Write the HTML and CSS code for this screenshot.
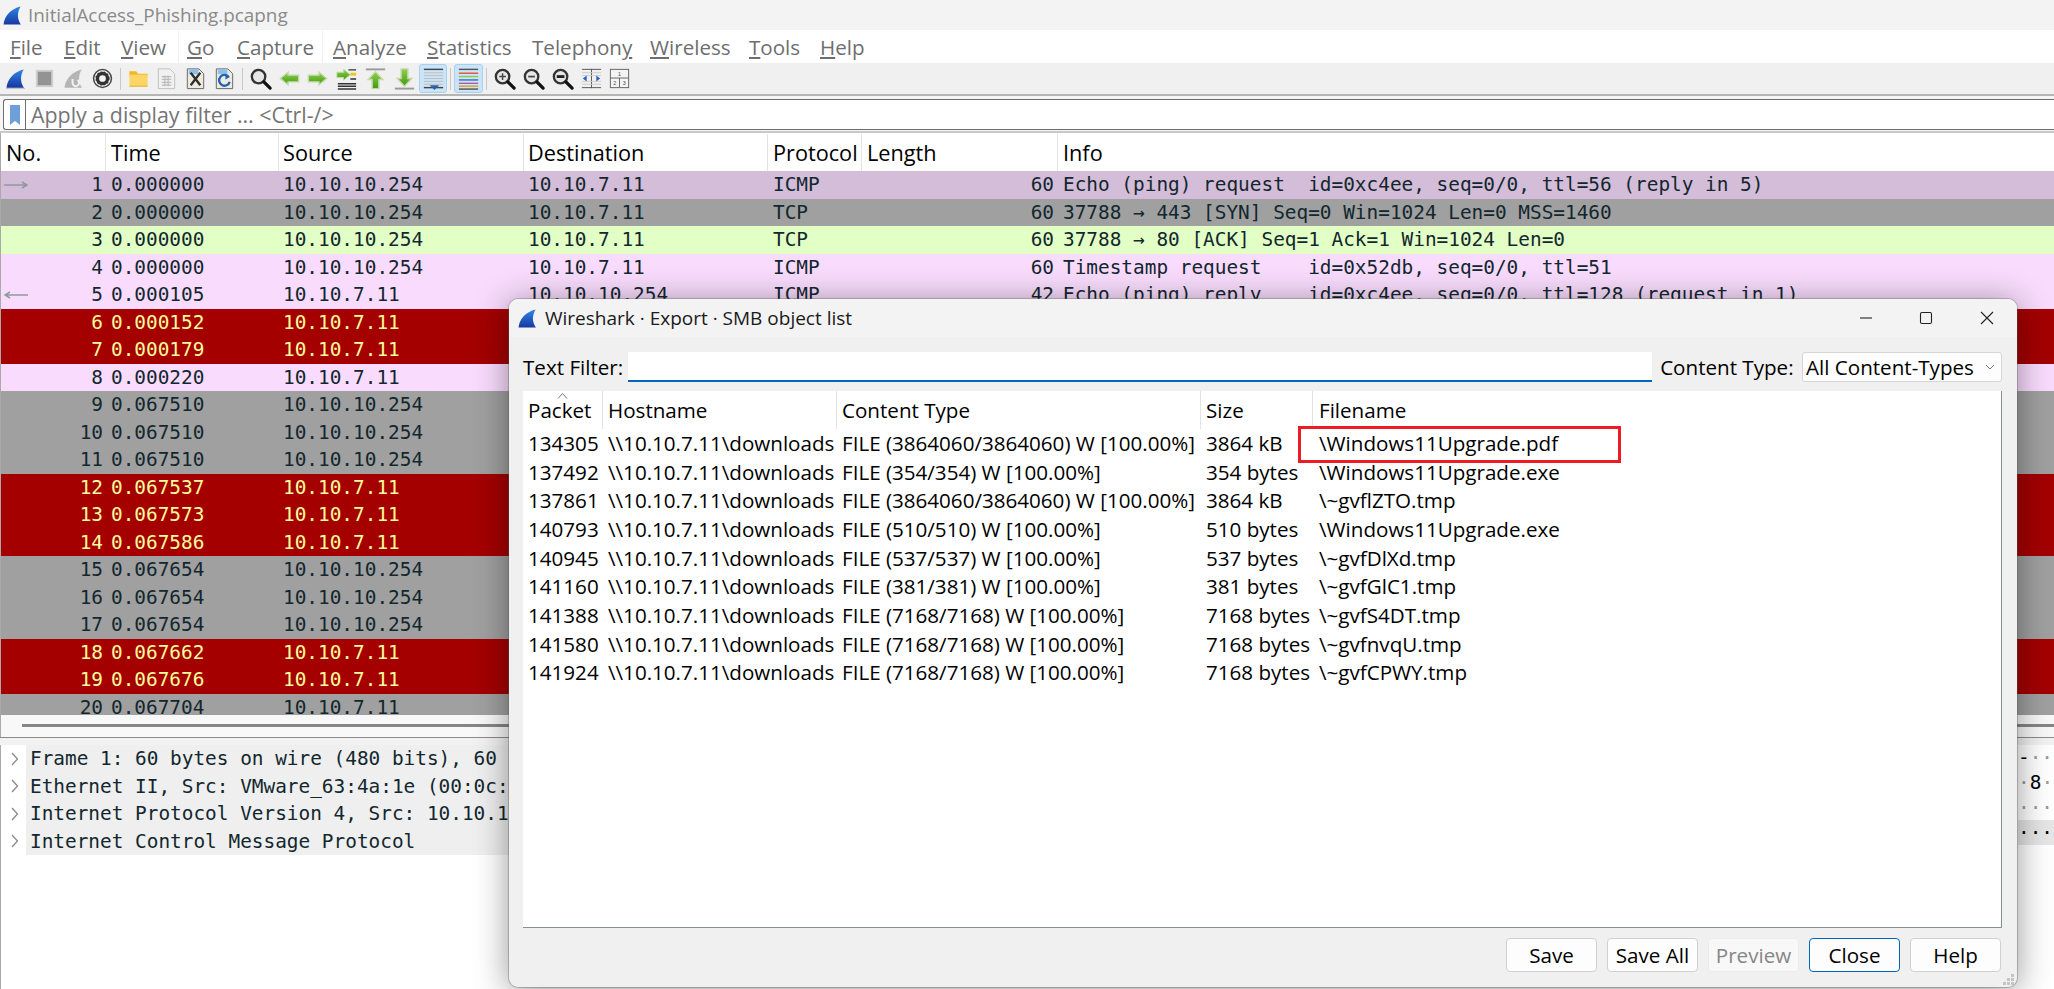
FILE: index.html
```html
<!DOCTYPE html>
<html lang="en">
<head>
<meta charset="utf-8">
<title>InitialAccess_Phishing.pcapng</title>
<link rel="stylesheet" href="styles.css">
</head>
<body>
<svg class="defs" aria-hidden="true">
  <defs>
    <linearGradient id="blue" x1="0" y1="0" x2="0" y2="1"><stop offset="0" stop-color="#2f86e6"/><stop offset="1" stop-color="#17379f"/></linearGradient>
    <linearGradient id="green" x1="0" y1="0" x2="0" y2="1"><stop offset="0" stop-color="#8fd24a"/><stop offset="1" stop-color="#3f9a12"/></linearGradient>
    <symbol id="fin" viewBox="0 0 20 20"><path d="M.6 19.6C1.4 11 8 3 18.6.6 15 6 14.6 13.5 18.8 19.6Z" fill="url(#blue)"/></symbol>
    <symbol id="lens" viewBox="0 0 26 26"><circle cx="11" cy="11" r="7" fill="#e6e6e6" stroke="#333" stroke-width="2.4"/><path d="M16.500 16.500 23 23" stroke="#111" stroke-width="3.400" stroke-linecap="round"/></symbol>
  </defs>
</svg>
<div class="app">
  <header class="titlebar">
    <svg class="logo"><use href="#fin"/></svg>
    <span>InitialAccess_Phishing.pcapng</span>
  </header>
  <nav class="menu">
    <span class="m m-file"><u>F</u>ile</span>
    <span class="m m-edit"><u>E</u>dit</span>
    <span class="m m-view"><u>V</u>iew</span>
    <i class="msep msep-a"></i>
    <span class="m m-go"><u>G</u>o</span>
    <span class="m m-cap"><u>C</u>apture</span>
    <i class="msep msep-b"></i>
    <span class="m m-ana"><u>A</u>nalyze</span>
    <span class="m m-sta"><u>S</u>tatistics</span>
    <span class="m m-tel">Telephon<u>y</u></span>
    <span class="m m-wir"><u>W</u>ireless</span>
    <span class="m m-too"><u>T</u>ools</span>
    <span class="m m-hel"><u>H</u>elp</span>
  </nav>
  <div class="toolbar">
    <span class="tb"><svg viewBox="0 0 26 26"><use href="#fin" x="3" y="3" width="20" height="20"/><path d="M3 23.500h20" stroke="#bdbdbd"/></svg></span>
    <span class="tb"><svg viewBox="0 0 26 26"><rect x="5" y="5" width="16" height="16" fill="#939393" stroke="#cfcfcf" stroke-width="2"/></svg></span>
    <span class="tb"><svg viewBox="0 0 26 26"><path d="M3.600 22.600C4.400 14 11 6 21.600 3.600 18 9 17.600 16.500 21.800 22.600Z" fill="#b5b5b5"/><path d="M12 13.500v4.200a3.400 3.400 0 1 0 5.200-3" fill="none" stroke="#f4f4f4" stroke-width="2"/></svg></span>
    <span class="tb"><svg viewBox="0 0 26 26"><circle cx="13" cy="13" r="9.300" fill="#f4f4f4" stroke="#4a4a4a" stroke-width="1.600"/><circle cx="13" cy="13" r="5.200" fill="none" stroke="#333" stroke-width="3.400"/><circle cx="13" cy="13" r="6.600" fill="none" stroke="#333" stroke-width="1.600" stroke-dasharray="2 1.500"/></svg></span>
    <i class="sep"></i>
    <span class="tb"><svg viewBox="0 0 26 26"><path d="M3.500 5.500h7l2 2.500h10v3h-19Z" fill="#f0b624"/><path d="M3.500 9h19v12h-19Z" fill="#fbd667"/><path d="M3.500 20.500h19v1h-19Z" fill="#e7aa1d"/></svg></span>
    <span class="tb"><svg viewBox="0 0 26 26"><path d="M4.500 3h12l5 5v15.500h-17Z" fill="#f1f1f1" stroke="#c0c0c0"/><path d="M8 11h10M8 14h10M8 17h10M8 20h10M11.300 10v11M14.700 10v11" stroke="#bcbcbc" stroke-width="1.300"/></svg></span>
    <span class="tb"><svg viewBox="0 0 26 26"><path d="M4.500 3h12l5 5v15.500h-17Z" fill="#eeeade" stroke="#666"/><path d="M6 3.500h10v5H6Z" fill="#8cc0ea"/><path d="M8 7l10 13M18 7 8 20" stroke="#2e2e2e" stroke-width="2.400"/></svg></span>
    <span class="tb"><svg viewBox="0 0 26 26"><path d="M4.500 3h12l5 5v15.500h-17Z" fill="#eeeade" stroke="#666"/><path d="M6 3.500h10v5H6Z" fill="#8cc0ea"/><path d="M17.500 11.500a5.600 5.600 0 1 0 .9 5" fill="none" stroke="#1f62b8" stroke-width="2.400"/><path d="M14 8l4.500 3.500-4.500 2.500Z" fill="#1f62b8"/></svg></span>
    <i class="sep"></i>
    <span class="tb"><svg viewBox="0 0 26 26"><use href="#lens" width="26" height="26"/></svg></span>
    <span class="tb"><svg viewBox="0 0 26 26"><path d="M3.500 13l8-6.500V9.500h11v7h-11v3Z" fill="url(#green)" stroke="#c4d8aa" stroke-width="1.500"/></svg></span>
    <span class="tb"><svg viewBox="0 0 26 26"><path d="M22.500 13l-8-6.500V9.500h-11v7h11v3Z" fill="url(#green)" stroke="#c4d8aa" stroke-width="1.500"/></svg></span>
    <span class="tb"><svg viewBox="0 0 26 26"><path d="M4 18.500h19M4 21h19M4 24h19M15 4h8M17 13.500h6" stroke="#333" stroke-width="1.500"/><path d="M17 8.500h6" stroke="#e8c820" stroke-width="3"/><path d="M17 9 10 3.500v3H3v5.500h7v2.800Z" fill="url(#green)" stroke="#c4d8aa"/></svg></span>
    <span class="tb"><svg viewBox="0 0 26 26"><path d="M3 3.500h20" stroke="#9a9a9a" stroke-width="2"/><path d="M13 6l7.500 8h-4v9.500h-7V14h-4Z" fill="url(#green)" stroke="#c4d8aa" stroke-width="1.500"/></svg></span>
    <span class="tb"><svg viewBox="0 0 26 26"><path d="M3 23.500h20" stroke="#9a9a9a" stroke-width="2"/><path d="M13 21l-7.500-8h4V3h7v10h4Z" fill="url(#green)" stroke="#c4d8aa" stroke-width="1.500"/></svg></span>
    <span class="tb on"><svg viewBox="0 0 26 26"><path d="M3 3.500h20" stroke="#444" stroke-width="1.500"/><path d="M3 7h20M3 10h20M3 13h20M3 16h20M3 19h20" stroke="#bdbdbd"/><path d="M3 22.500h20" stroke="#444" stroke-width="1.500"/><path d="M9 20h10l-5 5Z" fill="#2b62a8"/></svg></span>
    <i class="sep"></i>
    <span class="tb on"><svg viewBox="0 0 26 26"><path d="M3 3.500h20" stroke="#555" stroke-width="1.500"/><path d="M3 7.500h20" stroke="#e2524a" stroke-width="1.500"/><path d="M3 11h20" stroke="#8ccf3f" stroke-width="1.500"/><path d="M3 14.500h20" stroke="#3a6fc8" stroke-width="1.500"/><path d="M3 18h20" stroke="#b05ab0" stroke-width="1.500"/><path d="M3 21h20" stroke="#e0a020" stroke-width="1.500"/><path d="M3 24h20" stroke="#555" stroke-width="1.500"/></svg></span>
    <i class="sep"></i>
    <span class="tb"><svg viewBox="0 0 26 26"><use href="#lens" width="26" height="26"/><path d="M7.500 11h7M11 7.500v7" stroke="#444" stroke-width="1.500"/></svg></span>
    <span class="tb"><svg viewBox="0 0 26 26"><use href="#lens" width="26" height="26"/><path d="M7.500 11h7" stroke="#444" stroke-width="1.800"/></svg></span>
    <span class="tb"><svg viewBox="0 0 26 26"><use href="#lens" width="26" height="26"/><path d="M7 11h8" stroke="#222" stroke-width="3"/></svg></span>
    <span class="tb"><svg viewBox="0 0 26 26"><path d="M3 3.500h20M3 22.500h20M13 3v20" stroke="#555"/><path d="M3 7h20M3 10h20M3 16h20M3 19h20" stroke="#ccc"/><path d="M4 13l4-3v6ZM22 13l-4-3v6Z" fill="#2b62c0"/></svg></span>
    <span class="tb"><svg viewBox="0 0 26 26"><rect x="3.500" y="3.500" width="19" height="19" fill="#f4f4f4" stroke="#666"/><path d="M3.500 12.500h19M13 12.500v10" stroke="#666"/><text x="13" y="10" class="pane-n">1</text><text x="8" y="20" class="pane-n">2</text><text x="18" y="20" class="pane-n">3</text></svg></span>
  </div>
  <div class="filter-wrap">
    <div class="filter">
      <span class="bookmark"><svg width="10" height="20" viewBox="0 0 10 20"><path d="M0 0h10v20L5 16 0 20Z" fill="#6f9fd8"/></svg></span>
      <span class="placeholder">Apply a display filter … &lt;Ctrl-/&gt;</span>
    </div>
  </div>
  <section class="plist">
    <div class="prow phead">
      <span>No.</span><span>Time</span><span>Source</span><span>Destination</span><span>Protocol</span><span>Length</span><span>Info</span>
    </div>
    <div class="prow p-sel"><span class="no"><svg class="flow" viewBox="0 0 24 8"><path d="M0 4h22M18 1l5 3-5 3" fill="none" stroke="#8f9a9c" stroke-width="1.500"/></svg>1</span><span>0.000000</span><span>10.10.10.254</span><span>10.10.7.11</span><span>ICMP</span><span class="len">60</span><span>Echo (ping) request  id=0xc4ee, seq=0/0, ttl=56 (reply in 5)</span></div>
    <div class="prow p-gray"><span class="no">2</span><span>0.000000</span><span>10.10.10.254</span><span>10.10.7.11</span><span>TCP</span><span class="len">60</span><span>37788 → 443 [SYN] Seq=0 Win=1024 Len=0 MSS=1460</span></div>
    <div class="prow p-green"><span class="no">3</span><span>0.000000</span><span>10.10.10.254</span><span>10.10.7.11</span><span>TCP</span><span class="len">60</span><span>37788 → 80 [ACK] Seq=1 Ack=1 Win=1024 Len=0</span></div>
    <div class="prow p-pink"><span class="no">4</span><span>0.000000</span><span>10.10.10.254</span><span>10.10.7.11</span><span>ICMP</span><span class="len">60</span><span>Timestamp request    id=0x52db, seq=0/0, ttl=51</span></div>
    <div class="prow p-pink"><span class="no"><svg class="flow" viewBox="0 0 24 8"><path d="M24 4H2M6 1 1 4l5 3" fill="none" stroke="#8f9a9c" stroke-width="1.500"/></svg>5</span><span>0.000105</span><span>10.10.7.11</span><span>10.10.10.254</span><span>ICMP</span><span class="len">42</span><span>Echo (ping) reply    id=0xc4ee, seq=0/0, ttl=128 (request in 1)</span></div>
    <div class="prow p-red"><span class="no">6</span><span>0.000152</span><span>10.10.7.11</span></div>
    <div class="prow p-red"><span class="no">7</span><span>0.000179</span><span>10.10.7.11</span></div>
    <div class="prow p-pink"><span class="no">8</span><span>0.000220</span><span>10.10.7.11</span></div>
    <div class="prow p-gray"><span class="no">9</span><span>0.067510</span><span>10.10.10.254</span></div>
    <div class="prow p-gray"><span class="no">10</span><span>0.067510</span><span>10.10.10.254</span></div>
    <div class="prow p-gray"><span class="no">11</span><span>0.067510</span><span>10.10.10.254</span></div>
    <div class="prow p-red"><span class="no">12</span><span>0.067537</span><span>10.10.7.11</span></div>
    <div class="prow p-red"><span class="no">13</span><span>0.067573</span><span>10.10.7.11</span></div>
    <div class="prow p-red"><span class="no">14</span><span>0.067586</span><span>10.10.7.11</span></div>
    <div class="prow p-gray"><span class="no">15</span><span>0.067654</span><span>10.10.10.254</span></div>
    <div class="prow p-gray"><span class="no">16</span><span>0.067654</span><span>10.10.10.254</span></div>
    <div class="prow p-gray"><span class="no">17</span><span>0.067654</span><span>10.10.10.254</span></div>
    <div class="prow p-red"><span class="no">18</span><span>0.067662</span><span>10.10.7.11</span></div>
    <div class="prow p-red"><span class="no">19</span><span>0.067676</span><span>10.10.7.11</span></div>
    <div class="prow p-gray p-last"><span class="no">20</span><span>0.067704</span><span>10.10.7.11</span></div>
  </section>
  <div class="hscroll"><i></i></div>
  <div class="split"></div>
  <section class="lower">
    <div class="tree">
      <div class="trow"><svg class="chev" viewBox="0 0 8 14"><path d="M1 1l5.500 6L1 13" fill="none" stroke="#8a8a8a" stroke-width="1.300"/></svg><span>Frame 1: 60 bytes on wire (480 bits), 60 bytes captured (480 bits)</span></div>
      <div class="trow"><svg class="chev" viewBox="0 0 8 14"><path d="M1 1l5.500 6L1 13" fill="none" stroke="#8a8a8a" stroke-width="1.300"/></svg><span>Ethernet II, Src: VMware_63:4a:1e (00:0c:29:63:4a:1e)</span></div>
      <div class="trow"><svg class="chev" viewBox="0 0 8 14"><path d="M1 1l5.500 6L1 13" fill="none" stroke="#8a8a8a" stroke-width="1.300"/></svg><span>Internet Protocol Version 4, Src: 10.10.10.254, Dst: 10.10.7.11</span></div>
      <div class="trow"><svg class="chev" viewBox="0 0 8 14"><path d="M1 1l5.500 6L1 13" fill="none" stroke="#8a8a8a" stroke-width="1.300"/></svg><span>Internet Control Message Protocol</span></div>
    </div>
    <div class="hex">
      <div class="hrow"><b>-</b>··</div>
      <div class="hrow">·<b>8</b>·</div>
      <div class="hrow">···</div>
      <div class="hrow hrow-sel"><b>···</b></div>
    </div>
  </section>
</div>

<div class="dialog">
  <div class="d-title">
    <svg class="d-logo"><use href="#fin"/></svg>
    <span class="d-name">Wireshark · Export · SMB object list</span>
    <div class="wctl">
      <span><svg width="14" height="14" viewBox="0 0 14 14"><path d="M1 7h12" stroke="#222" stroke-width="1.100"/></svg></span>
      <span><svg width="14" height="14" viewBox="0 0 14 14"><rect x="1.500" y="1.500" width="11" height="11" rx="1.500" fill="none" stroke="#222" stroke-width="1.100"/></svg></span>
      <span><svg width="14" height="14" viewBox="0 0 14 14"><path d="M1 1l12 12M13 1 1 13" stroke="#222" stroke-width="1.100"/></svg></span>
    </div>
  </div>
  <div class="d-body">
    <div class="d-filter">
      <label>Text Filter:</label>
      <div class="d-input"></div>
      <label>Content Type:</label>
      <div class="combo"><span>All Content-Types</span><svg width="10" height="6" viewBox="0 0 10 6"><path d="M1 1l4 4 4-4" fill="none" stroke="#777"/></svg></div>
    </div>
    <div class="olist">
      <div class="orow ohead">
        <span class="sorted"><svg class="caret" width="11" height="6" viewBox="0 0 11 6"><path d="M1 5.500l4.500-5 4.500 5" fill="none" stroke="#777"/></svg>Packet</span><span>Hostname</span><span>Content Type</span><span>Size</span><span>Filename</span>
      </div>
      <div class="orow"><span>134305</span><span>\\10.10.7.11\downloads</span><span>FILE (3864060/3864060) W [100.00%]</span><span>3864 kB</span><span>\Windows11Upgrade.pdf</span></div>
      <div class="orow"><span>137492</span><span>\\10.10.7.11\downloads</span><span>FILE (354/354) W [100.00%]</span><span>354 bytes</span><span>\Windows11Upgrade.exe</span></div>
      <div class="orow"><span>137861</span><span>\\10.10.7.11\downloads</span><span>FILE (3864060/3864060) W [100.00%]</span><span>3864 kB</span><span>\~gvflZTO.tmp</span></div>
      <div class="orow"><span>140793</span><span>\\10.10.7.11\downloads</span><span>FILE (510/510) W [100.00%]</span><span>510 bytes</span><span>\Windows11Upgrade.exe</span></div>
      <div class="orow"><span>140945</span><span>\\10.10.7.11\downloads</span><span>FILE (537/537) W [100.00%]</span><span>537 bytes</span><span>\~gvfDlXd.tmp</span></div>
      <div class="orow"><span>141160</span><span>\\10.10.7.11\downloads</span><span>FILE (381/381) W [100.00%]</span><span>381 bytes</span><span>\~gvfGlC1.tmp</span></div>
      <div class="orow"><span>141388</span><span>\\10.10.7.11\downloads</span><span>FILE (7168/7168) W [100.00%]</span><span>7168 bytes</span><span>\~gvfS4DT.tmp</span></div>
      <div class="orow"><span>141580</span><span>\\10.10.7.11\downloads</span><span>FILE (7168/7168) W [100.00%]</span><span>7168 bytes</span><span>\~gvfnvqU.tmp</span></div>
      <div class="orow"><span>141924</span><span>\\10.10.7.11\downloads</span><span>FILE (7168/7168) W [100.00%]</span><span>7168 bytes</span><span>\~gvfCPWY.tmp</span></div>
      <div class="redbox"></div>
    </div>
    <div class="d-btns">
      <button>Save</button><button>Save All</button><button class="off">Preview</button><button class="def">Close</button><button>Help</button>
    </div>
  </div>
  <svg class="grip" width="12" height="12" viewBox="0 0 12 12"><path d="M9 0h3v3H9ZM5 4h3v3H5ZM9 4h3v3H9ZM1 8h3v3H1ZM5 8h3v3H5ZM9 8h3v3H9Z" fill="#c4c4c4"/></svg>
</div>
</body>
</html>
```
FILE: styles.css
```css
* { box-sizing: border-box; }
html, body { margin: 0; height: 100%; overflow: hidden; background: #fff; }
body { font-family: "Open Sans", "Noto Sans", sans-serif; font-size: 20.6px; color: #000; position: relative; }
.defs { position: absolute; width: 0; height: 0; }

.app { width: 2054px; height: 989px; display: flex; flex-direction: column; }

.titlebar { height: 30px; background: #f3f3f3; display: flex; align-items: center; color: #8a8a8a; padding-left: 3px; gap: 6px; font-size: 18.9px; }
.logo { width: 19px; height: 19px; }

.menu { height: 33px; background: #fff; color: #6e6e6e; display: flex; align-items: center; padding: 1px 0 0 10px; }
.m { display: block; }
.m-file { width: 54px; }
.m-edit { width: 57px; }
.m-view { width: 57px; }
.msep { align-self: stretch; width: 1px; background: #efefef; flex: none; }
.msep-a { margin-right: 8px; }
.msep-b { margin-right: 10px; }
.m-go { width: 50px; }
.m-cap { width: 85px; }
.m-ana { width: 94px; }
.m-sta { width: 105px; }
.m-tel { width: 118px; }
.m-wir { width: 99px; }
.m-too { width: 71px; }

.toolbar { height: 31px; background: #f0f0f0; display: flex; align-items: center; padding-left: 1.5px; }
.tb { width: 28.8px; height: 29px; display: flex; align-items: center; justify-content: center; border: 1px solid transparent; border-radius: 3px; }
.tb svg { width: 25px; height: 25px; display: block; flex: none; }
.tb.on { background: #cce4f7; border-color: #a8d0f0; }
.sep { width: 1px; height: 22px; background: #c8c8c8; margin: 0 3px; }
.pane-n { font-family: "Liberation Sans", sans-serif; font-size: 5.5px; fill: #444; text-anchor: middle; }

.filter-wrap { height: 39px; border-top: 2px solid #b5b5b5; border-bottom: 2px solid #c9c9c9; padding-top: 3px; padding-bottom: 1px; background: #f5f5f5; }
.filter { height: 31px; margin-left: 3px; display: flex; align-items: center; background: #fff; border: 1px solid #6d6d6d; border-right: 0; border-radius: 3px 0 0 3px; }
.bookmark { width: 22px; height: 29px; display: flex; align-items: center; justify-content: center; border-right: 1px solid #6d6d6d; }
.placeholder { color: #757575; padding-left: 5px; font-size: 21.4px; }

.plist { height: 582px; background: #fff; border-left: 1px solid #aaa; display: flex; flex-direction: column; }
.prow { display: grid; grid-template-columns: 105px 173px 245px 244px 94px 196px 1fr; height: 27.5px; flex: none; align-items: center; font-family: "DejaVu Sans Mono", monospace; font-size: 19.4px; color: #12272e; white-space: pre; }
.prow > span { padding-left: 5px; overflow: hidden; }
.prow > span:nth-child(3), .prow > span:nth-child(4) { padding-left: 4px; }
.prow > .no { padding: 0 3px; display: flex; align-items: center; justify-content: flex-end; }
.prow > .len { text-align: right; padding: 0 4px 0 0; }
.flow { width: 24px; height: 8px; flex: none; margin-right: auto; }
.p-last { height: 21.5px; padding-top: 6px; line-height: 15.5px; align-items: start; }
.prow.p-last > span { overflow: visible; }

.phead { height: 38px; padding-top: 1px; font-family: "Open Sans", sans-serif; font-size: 21.7px; color: #000; align-items: stretch; }
.phead > span { display: flex; align-items: center; padding-left: 5px; border-right: 1px solid #e3e3e3; }
.phead > span:last-child { border-right: 0; }
.p-sel { background: #d4bdd8; }
.p-gray { background: #a0a0a0; }
.p-green { background: #e2ffc5; }
.p-pink { background: #f9dcfd; }
.p-red { background: #a40000; color: #fffc9c; }

.hscroll { height: 22px; background: #f8f8f8; border-left: 1px solid #aaa; padding: 9px 0 0 21px; }
.hscroll i { display: block; height: 3px; background: #868686; }
.split { height: 8px; background: #f2f2f2; border-top: 1px solid #8b8b8b; }

.lower { flex: 1; background: #fff; border-left: 1px solid #aaa; display: flex; min-height: 0; }
.tree { width: 1800px; display: flex; flex-direction: column; }
.trow { height: 27.5px; display: flex; align-items: center; font-family: "DejaVu Sans Mono", monospace; font-size: 19.4px; color: #12272e; white-space: pre; padding-left: 10px; }
.chev { width: 8px; height: 14px; flex: none; margin-right: 7px; }
.trow span { background: #efefef; flex: 1; height: 100%; display: flex; align-items: center; padding-left: 4px; }
.hex { margin-left: auto; width: 36px; font-family: "DejaVu Sans Mono", monospace; font-size: 19.4px; color: #9a9a9a; }
.hrow { height: 25px; line-height: 25px; white-space: pre; }
.hrow b { font-weight: 400; color: #000; }
.hrow-sel { background: #e6e6e6; }

.dialog { position: absolute; left: 509px; top: 299px; width: 1508px; height: 688px; background: #f0f0f0; border-radius: 9px; box-shadow: 0 4px 34px rgba(0,0,0,.42), 0 0 0 1px rgba(110,110,110,.35); display: flex; flex-direction: column; }
.d-title { height: 38px; background: #f3f3f3; border-radius: 9px 9px 0 0; display: flex; align-items: center; padding-left: 9px; flex: none; font-size: 19px; }
.d-logo { width: 19px; height: 19px; margin-right: 8px; }
.d-name { color: #1a1a1a; }
.wctl { margin-left: auto; display: flex; }
.wctl span { width: 60.5px; display: flex; justify-content: center; }
.d-body { flex: 1; display: flex; flex-direction: column; padding: 15px 15px 0 14px; }
.d-filter { display: flex; align-items: center; height: 30px; }
.d-input { width: 1024px; height: 30px; margin: 0 8px 0 5px; background: #fff; border-bottom: 2px solid #0067c0; flex: none; }
.combo { margin-left: auto; width: 200px; height: 30px; background: #fdfdfd; border: 1px solid #d6d6d6; border-radius: 3px; display: flex; align-items: center; justify-content: space-between; padding: 0 6px 0 3px; }
.olist { position: relative; height: 537px; margin-top: 9px; background: #fff; border-right: 1px solid #8a8f95; border-bottom: 1px solid #8a8f95; flex: none; }
.orow { display: grid; grid-template-columns: 80px 234px 364px 112px 1fr; height: 28.7px; align-items: center; white-space: nowrap; }
.orow > span { padding-left: 5px; overflow: hidden; }
.orow > span:nth-child(5) { padding-left: 6px; }
.ohead { height: 37.5px; align-items: stretch; }
.ohead > span { display: flex; align-items: center; border-right: 1px solid #e3e3e3; }
.ohead > span:last-child { border-right: 0; }
.ohead > .sorted { position: relative; }
.caret { position: absolute; left: 34px; top: 2px; }
.redbox { position: absolute; left: 775px; top: 35px; width: 323px; height: 37px; border: 3px solid #ed1c24; }
.d-btns { display: flex; justify-content: flex-end; gap: 10px; margin-top: 10px; padding-right: 1px; }
.d-btns button { width: 91px; height: 34px; padding: 0; font: inherit; color: #000; background: #fdfdfd; border: 1px solid #d0d0d0; border-radius: 4px; }
.d-btns .off { color: #868686; background: #f8f8f8; border-color: #ececec; }
.d-btns .def { border: 1.5px solid #0067c0; }
.grip { position: absolute; right: 3px; bottom: 1px; }
```
